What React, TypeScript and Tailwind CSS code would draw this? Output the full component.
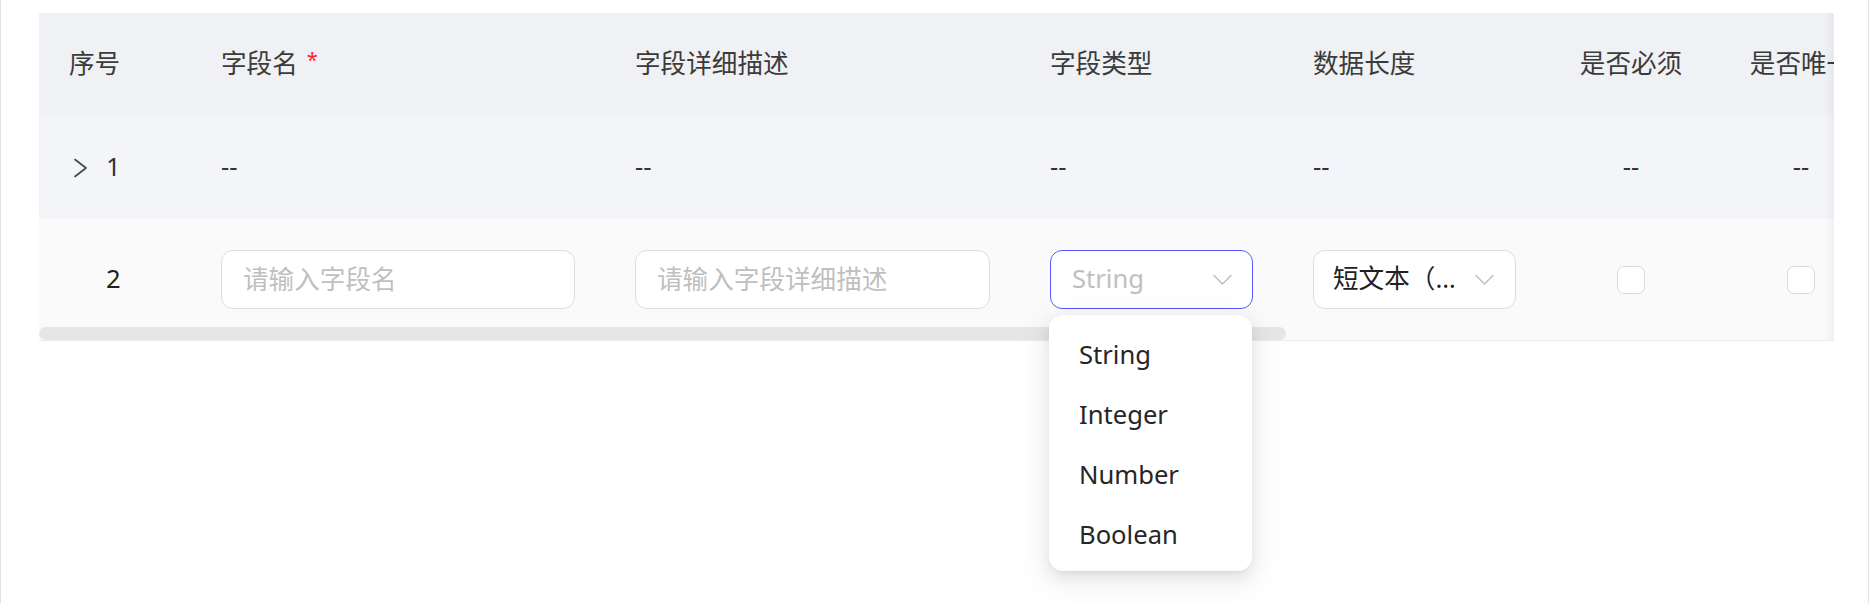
import { ReactNode } from 'react'

const font = '"Noto Sans", "Noto Sans CJK SC", sans-serif'

// column widths in px, the last one is cut off by the scroll box
const cols = ['w-[152px]', 'w-[414px]', 'w-[415px]', 'w-[263px]', 'w-[263px]', 'w-[170px]', 'w-[170px]']

function Cell({ i, center, children }: { i: number; center?: boolean; children?: ReactNode }) {
  return (
    <div className={`${cols[i]} flex shrink-0 items-center px-[30px] ${center ? 'justify-center' : ''}`}>
      {children}
    </div>
  )
}

function Chevron({ color = '#bfbfbf' }: { color?: string }) {
  return (
    <svg width="19" height="11" viewBox="0 0 19 11" fill="none" className="shrink-0">
      <path d="M1 1.5l8.5 8.5 8.5-8.5" stroke={color} strokeWidth="1.5" strokeLinecap="round" strokeLinejoin="round" />
    </svg>
  )
}

function Checkbox() {
  return <div className="h-[28px] w-[28px] rounded-[7px] border border-[#d9d9d9] bg-white" />
}

const headers = ['序号', '字段名', '字段详细描述', '字段类型', '数据长度', '是否必须', '是否唯一']

export default function App() {
  return (
    <div
      className="relative h-[603px] w-[1869px] border-x border-[#e3e3e3] bg-white"
      style={{ fontFamily: font }}
    >
      <div className="pl-[38px] pt-[13px]">
        <div className="relative w-[1795px] overflow-hidden border-b border-[#ececec]">
          {/* Header */}
          <div className="flex h-[103px] w-max bg-[#f0f1f4] text-[25.6px] text-[#3b3b3b]">
            {headers.map((h, i) => (
              <Cell key={h} i={i} center={i >= 5}>
                <span className="whitespace-nowrap">{h}</span>
                {i === 1 && (
                  <span className="ml-[9px] -mt-[10px] text-[20px] leading-none text-[#f5222d]">*</span>
                )}
              </Cell>
            ))}
          </div>

          {/* Row 1 */}
          <div className="flex h-[103px] w-max bg-[#f4f5f9] text-[25.6px] text-[#333]">
            <Cell i={0}>
              <svg width="24" height="20" viewBox="0 0 24 20" fill="none" className="shrink-0">
                <path d="M6 1.5l11 8.5-11 8.5" stroke="#444" strokeWidth="1.6" strokeLinecap="round" strokeLinejoin="round" />
              </svg>
              <span className="ml-[13px]">1</span>
            </Cell>
            <Cell i={1}>--</Cell>
            <Cell i={2}>--</Cell>
            <Cell i={3}>--</Cell>
            <Cell i={4}>--</Cell>
            <Cell i={5} center>--</Cell>
            <Cell i={6} center>--</Cell>
          </div>

          {/* Row 2 */}
          <div className="flex h-[121px] w-max bg-[#fafafa] text-[25.6px] text-[#222]">
            <Cell i={0}>
              <span className="w-[24px] shrink-0" />
              <span className="ml-[13px]">2</span>
            </Cell>
            <Cell i={1}>
              <input
                placeholder="请输入字段名"
                className="h-[59px] w-full rounded-[12px] border border-[#dcdcdc] bg-white px-[21px] outline-none placeholder:text-[#bfbfbf]"
              />
            </Cell>
            <Cell i={2}>
              <input
                placeholder="请输入字段详细描述"
                className="h-[59px] w-full rounded-[12px] border border-[#dcdcdc] bg-white px-[21px] outline-none placeholder:text-[#bfbfbf]"
              />
            </Cell>
            <Cell i={3}>
              <div className="flex h-[59px] w-full items-center justify-between rounded-[12px] border border-[#5a55ff] bg-white pl-[21px] pr-[20px]">
                <span className="text-[#bfbfbf]">String</span>
                <Chevron />
              </div>
            </Cell>
            <Cell i={4}>
              <div className="flex h-[59px] w-full items-center gap-[12px] rounded-[12px] border border-[#dcdcdc] bg-white pl-[19px] pr-[21px]">
                <span className="min-w-0 flex-1 truncate">短文本（0-255）</span>
                <Chevron />
              </div>
            </Cell>
            <Cell i={5} center>
              <Checkbox />
            </Cell>
            <Cell i={6} center>
              <Checkbox />
            </Cell>
          </div>

          {/* horizontal scrollbar thumb */}
          <div className="absolute bottom-0 left-0 h-[13px] w-[1247px] rounded-full bg-[#e6e6e6]" />
          {/* right edge shadow, more columns to scroll to */}
          <div className="pointer-events-none absolute bottom-0 right-0 top-0 w-[10px] bg-gradient-to-l from-black/[0.04] to-transparent" />
        </div>
      </div>

      {/* Open select dropdown */}
      <div className="absolute left-[1048px] top-[315px] w-[203px] rounded-[14px] bg-white pb-[6px] pt-[10px] text-[25.6px] text-[#262626] shadow-[0_6px_16px_rgba(0,0,0,0.08),0_3px_6px_-4px_rgba(0,0,0,0.12),0_9px_28px_8px_rgba(0,0,0,0.05)]">
        {['String', 'Integer', 'Number', 'Boolean'].map((o) => (
          <div key={o} className="flex h-[60px] items-center pl-[30px]">
            {o}
          </div>
        ))}
      </div>
    </div>
  )
}
